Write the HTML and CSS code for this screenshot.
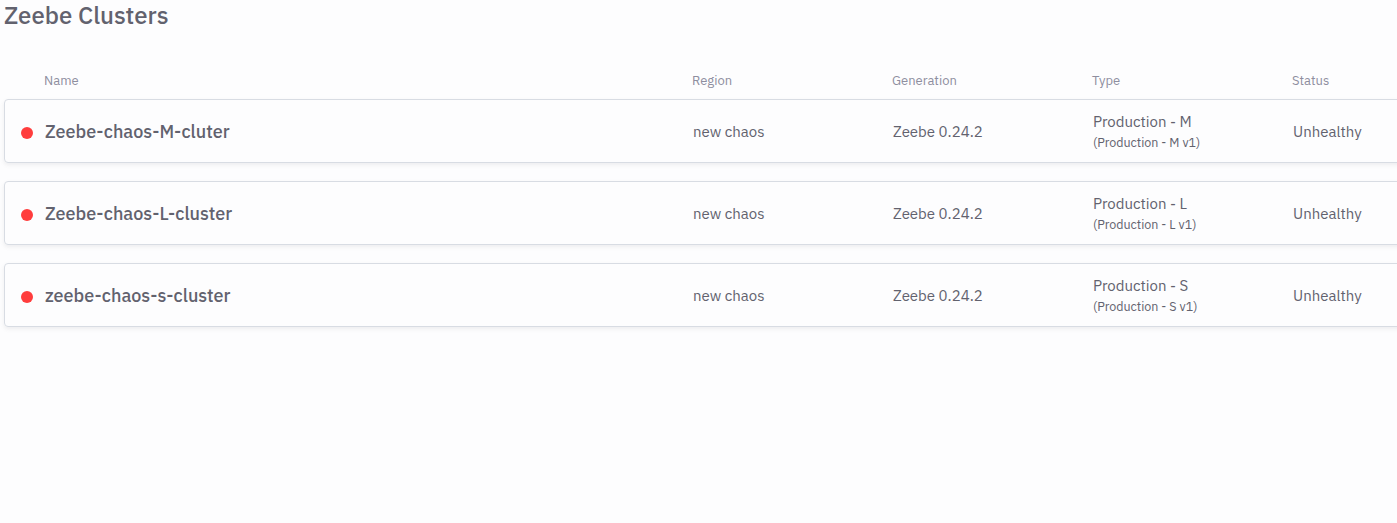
FILE: index.html
```html
<!DOCTYPE html>
<html lang="en">
<head>
<meta charset="utf-8">
<title>Zeebe Clusters</title>
<link rel="stylesheet" href="styles.css">
</head>
<body>
<main class="page">
  <h1 class="title">Zeebe Clusters</h1>
  <table class="clusters">
    <thead>
      <tr class="head">
        <th class="first">Name</th><th>Region</th><th>Generation</th><th>Type</th><th>Status</th>
      </tr>
    </thead>
    <tbody class="list">
      <tr class="row">
        <td class="name"><span class="dot"></span>Zeebe-chaos-M-cluter</td>
        <td>new chaos</td><td>Zeebe 0.24.2</td>
        <td>Production - M<small class="plan">(Production - M v1)</small></td>
        <td>Unhealthy</td>
      </tr>
      <tr class="row">
        <td class="name"><span class="dot"></span>Zeebe-chaos-L-cluster</td>
        <td>new chaos</td><td>Zeebe 0.24.2</td>
        <td>Production - L<small class="plan">(Production - L v1)</small></td>
        <td>Unhealthy</td>
      </tr>
      <tr class="row">
        <td class="name"><span class="dot"></span>zeebe-chaos-s-cluster</td>
        <td>new chaos</td><td>Zeebe 0.24.2</td>
        <td>Production - S<small class="plan">(Production - S v1)</small></td>
        <td>Unhealthy</td>
      </tr>
    </tbody>
  </table>
</main>
</body>
</html>
```
FILE: styles.css
```css
* { box-sizing: border-box; }
body {
  margin: 0;
  background: #fdfdfe;
  color: #62626e;
  font-family: "IBM Plex Sans", Roboto, "Liberation Sans", sans-serif;
  font-size: 15px;
  line-height: 20px;
}
.page { padding-left: 4px; overflow-x: hidden; min-height: 100vh; }
.title { margin: 0; font-size: 24px; line-height: 30px; font-weight: 500; }
.clusters { display: block; margin: 41px -8px 0 0; }
.clusters thead { display: block; }
.head, .row {
  display: grid;
  grid-template-columns: minmax(0, 1fr) 200px 200px 200px 113px;
  align-items: center;
}
.head { margin-bottom: 8px; }
.head th { padding: 0; text-align: left; font-size: 13px; font-weight: 400; color: #8e8e9f; }
.head .first { padding-left: 40px; }
.list { display: grid; gap: 18px; }
.row {
  padding: 12px 0 10px;
  margin-right: -2px;
  border: 1px solid #d8dce3;
  border-radius: 4px;
  box-shadow: 0 2px 4px rgba(98, 98, 110, 0.1);
}
.row td { padding: 0; }
.row .name { display: flex; align-items: center; gap: 12px; padding-left: 16px; font-size: 18px; font-weight: 500; }
.dot { width: 12px; height: 12px; margin-top: 2px; border-radius: 50%; background: #ff3d3d; }
.plan { display: block; }
```
